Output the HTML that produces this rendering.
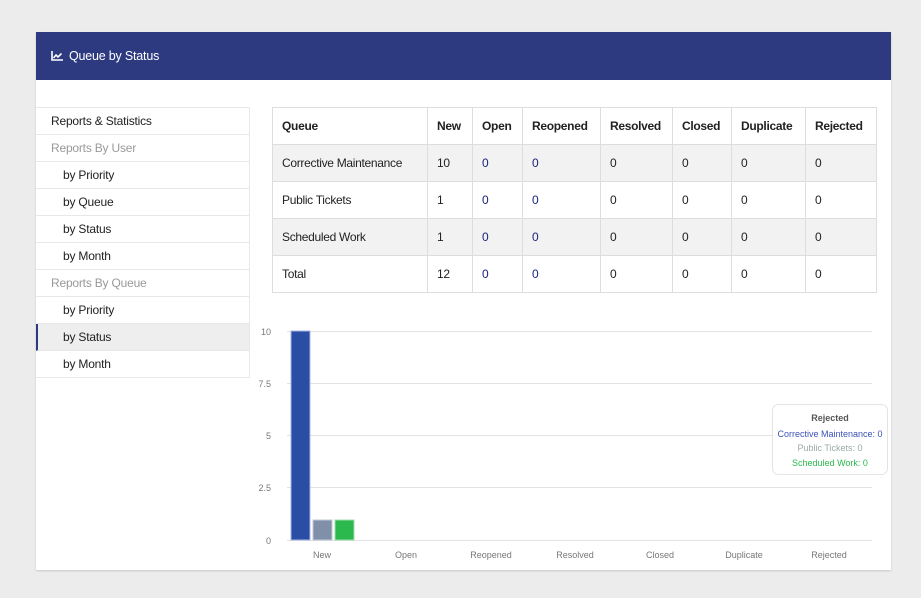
<!DOCTYPE html>
<html><head><meta charset="utf-8"><style>
*{box-sizing:border-box;margin:0;padding:0}
body{width:921px;height:598px;background:#ececec;font-family:"Liberation Sans",Arial,sans-serif;position:relative;overflow:hidden}
.card{position:absolute;left:36px;top:32px;width:855px;height:538px;background:#fff;box-shadow:0 1px 2px rgba(0,0,0,.15)}
.hdr{height:48px;background:#2d3a80;color:#fff;font-size:12.5px;display:flex;align-items:center;padding-left:15px;letter-spacing:-0.2px}
.hdr svg{margin-right:6px}
.side{position:absolute;left:0;top:75px;width:214px;border-top:1px solid #e8e8e8}
.side div{height:27px;line-height:26px;border-bottom:1px solid #e8e8e8;border-right:1px solid #e8e8e8;font-size:12px;color:#222;padding-left:15px;letter-spacing:-0.2px}
.side .g{color:#999}
.side .s{padding-left:27px}
.side .a{background:#eee;border-left:2px solid #2d3a80;padding-left:25px}
table{position:absolute;left:236px;top:75px;width:604px;border-collapse:collapse;font-size:12px;color:#222;table-layout:fixed;letter-spacing:-0.3px}
td,th{border:1px solid #ddd;height:37px;padding:0 9px;text-align:left;white-space:nowrap;overflow:hidden}
th{font-weight:bold}
tr.z td{background:#f2f2f2}
td.n{color:#1a237e}
</style></head><body>
<div class="card">
<div class="hdr"><svg width="12" height="10" viewBox="0 0 12 10"><path d="M1 0V9H12" stroke="#fff" stroke-width="1.6" fill="none"/><path d="M2.5 7L5 4L7 6L10.5 2.5" stroke="#fff" stroke-width="1.6" fill="none"/></svg>Queue by Status</div>
<div class="side">
<div>Reports &amp; Statistics</div>
<div class="g">Reports By User</div>
<div class="s">by Priority</div>
<div class="s">by Queue</div>
<div class="s">by Status</div>
<div class="s">by Month</div>
<div class="g">Reports By Queue</div>
<div class="s">by Priority</div>
<div class="a">by Status</div>
<div class="s">by Month</div>
</div>
<table>
<colgroup><col style="width:155px"><col style="width:45px"><col style="width:50px"><col style="width:78px"><col style="width:72px"><col style="width:59px"><col style="width:74px"><col style="width:71px"></colgroup>
<tr><th>Queue</th><th>New</th><th>Open</th><th>Reopened</th><th>Resolved</th><th>Closed</th><th>Duplicate</th><th>Rejected</th></tr>
<tr class="z"><td>Corrective Maintenance</td><td>10</td><td class="n">0</td><td class="n">0</td><td>0</td><td>0</td><td>0</td><td>0</td></tr>
<tr><td>Public Tickets</td><td>1</td><td class="n">0</td><td class="n">0</td><td>0</td><td>0</td><td>0</td><td>0</td></tr>
<tr class="z"><td>Scheduled Work</td><td>1</td><td class="n">0</td><td class="n">0</td><td>0</td><td>0</td><td>0</td><td>0</td></tr>
<tr><td>Total</td><td>12</td><td class="n">0</td><td class="n">0</td><td>0</td><td>0</td><td>0</td><td>0</td></tr>
</table>
</div>
<svg style="position:absolute;left:0;top:0" width="921" height="598" font-family="Liberation Sans,Arial,sans-serif" font-size="9" fill="#777">
<g stroke="#e2e2e2" stroke-width="1">
<line x1="287" y1="331.5" x2="872" y2="331.5"/><line x1="287" y1="383.5" x2="872" y2="383.5"/><line x1="287" y1="435.5" x2="872" y2="435.5"/><line x1="287" y1="487.5" x2="872" y2="487.5"/><line x1="287" y1="540.5" x2="872" y2="540.5"/>
</g>
<g text-anchor="end"><text x="271" y="335">10</text><text x="271" y="387">7.5</text><text x="271" y="439">5</text><text x="271" y="491">2.5</text><text x="271" y="544">0</text></g>
<rect x="291" y="331" width="19" height="209" fill="#2a4ea6" stroke="#a9b6e0" stroke-width="1"/>
<rect x="313" y="520" width="19" height="20" fill="#7f90a8" stroke="#c0c8d6"/>
<rect x="335" y="520" width="19" height="20" fill="#2bb84c" stroke="#9fe0ae"/>
<g text-anchor="middle"><text x="322" y="558">New</text><text x="406" y="558">Open</text><text x="491" y="558">Reopened</text><text x="575" y="558">Resolved</text><text x="660" y="558">Closed</text><text x="744" y="558">Duplicate</text><text x="829" y="558">Rejected</text></g>
<rect x="772.5" y="404.5" width="115" height="70" rx="6" fill="#fff" stroke="#e4e4e4"/>
<g text-anchor="middle"><text x="830" y="421" font-weight="bold" fill="#555">Rejected</text><text x="830" y="437" fill="#3a52b8">Corrective Maintenance: 0</text><text x="830" y="451" fill="#9aa">Public Tickets: 0</text><text x="830" y="466" fill="#2bb84c">Scheduled Work: 0</text></g>
</svg>
</body></html>
